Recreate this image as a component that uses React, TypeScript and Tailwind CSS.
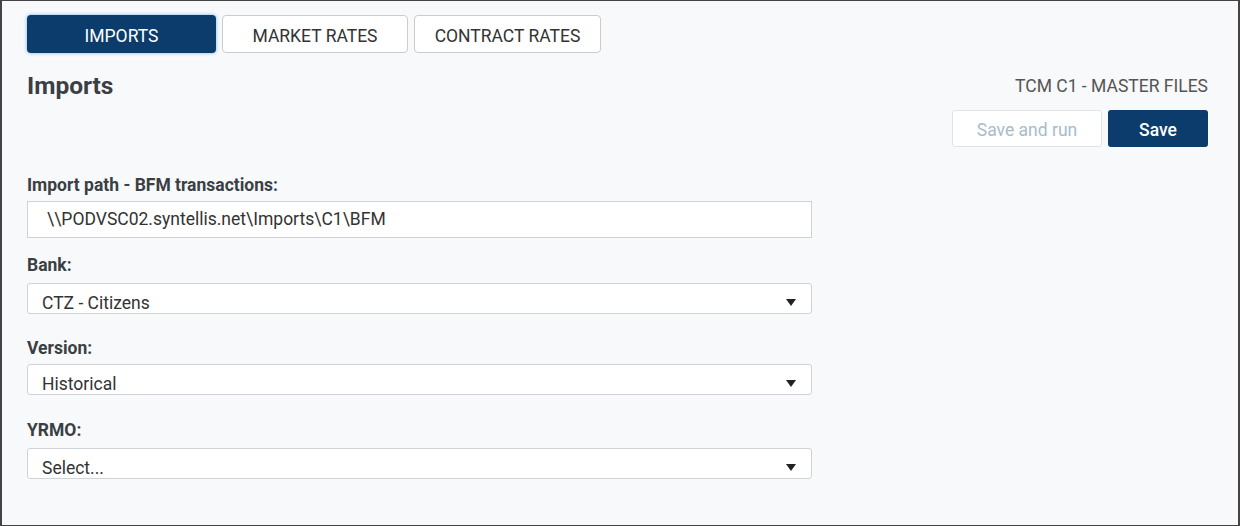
import { useState } from 'react'

const TABS = ['IMPORTS', 'MARKET RATES', 'CONTRACT RATES']

function Caret() {
  return (
    <svg width="10" height="7" viewBox="0 0 10 7" className="shrink-0">
      <path d="M0 0 H10 L5 7 Z" fill="#222" />
    </svg>
  )
}

function SelectBox({ value, className = '' }: { value: string; className?: string }) {
  return (
    <div className={`w-[785px] h-[31px] bg-white border border-[#cfd3d7] rounded-[3px] flex items-end justify-between pl-[14px] pr-[15px] ${className}`}>
      <span className="text-[17.5px] leading-[20px] text-[#333]">{value}</span>
      <span className="pb-[7px]"><Caret /></span>
    </div>
  )
}

export default function App() {
  const [tab, setTab] = useState(0)
  const tabWidths = ['w-[189px]', 'w-[186px]', 'w-[187px]']

  return (
    <div
      className="w-[1240px] h-[526px] box-border border-t border-b border-l-2 border-r-2 border-[#444] bg-[#f8f9fb] pl-[25px] pr-[30px] pt-[14px] text-[#333]"
      style={{ fontFamily: 'Roboto, "Liberation Sans", sans-serif' }}
    >
      <div className="flex gap-[6px]">
        {TABS.map((t, i) => (
          <button
            key={t}
            onClick={() => setTab(i)}
            className={`${tabWidths[i]} h-[38px] pt-[5px] rounded-[4px] text-[17.5px] leading-none ${
              tab === i
                ? 'bg-[#0b3c6b] text-white shadow-[0_0_3px_1px_#a9cff5]'
                : 'bg-white border border-[#ccc] text-[#333]'
            }`}
          >
            {t}
          </button>
        ))}
      </div>

      <div className="flex items-center justify-between mt-[18px] h-[30px]">
        <h1 className="text-[24.5px] font-bold text-[#3a3f44]">Imports</h1>
        <span className="text-[17.5px] text-[#555]">TCM C1 - MASTER FILES</span>
      </div>

      <div className="flex justify-end gap-[6px] mt-[9px]">
        <button className="w-[150px] h-[37px] pt-[4px] bg-white border border-[#dfe4ea] rounded-[3px] text-[17.5px] text-[#a8bbcc]">
          Save and run
        </button>
        <button className="w-[100px] h-[37px] pt-[4px] bg-[#0b3c6b] rounded-[3px] text-[17.5px] font-medium text-white">
          Save
        </button>
      </div>

      <div className="mt-[28px] text-[17.5px] leading-[20px] font-bold text-[#3a3f44]">Import path - BFM transactions:</div>
      <div className="mt-[6px] w-[785px] h-[37px] bg-white border border-[#cfd3d7] flex items-center pl-[19px]">
        <span className="text-[17.5px] text-[#333]">\\PODVSC02.syntellis.net\Imports\C1\BFM</span>
      </div>

      <div className="mt-[17px] text-[17.5px] leading-[20px] font-bold text-[#3a3f44]">Bank:</div>
      <SelectBox value="CTZ - Citizens" className="mt-[8px]" />

      <div className="mt-[24px] text-[17.5px] leading-[20px] font-bold text-[#3a3f44]">Version:</div>
      <SelectBox value="Historical" className="mt-[6px]" />

      <div className="mt-[25px] text-[17.5px] leading-[20px] font-bold text-[#3a3f44]">YRMO:</div>
      <SelectBox value="Select..." className="mt-[8px]" />
    </div>
  )
}
